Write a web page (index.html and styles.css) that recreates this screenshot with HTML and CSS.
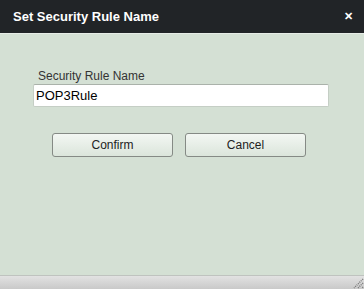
FILE: index.html
```html
<!DOCTYPE html>
<html>
<head>
  <title>Set Security Rule Name</title>
  <link rel="stylesheet" href="styles.css">
</head>
<body>
  <div class="dialog">
    <div class="dialog-header">
      <h2>Set Security Rule Name</h2>
      <span class="close-button">&#x2715;</span>
    </div>

    <div class="dialog-body">
      <form id="rule-form">
        <label for="rule-name">Security Rule Name</label>
        <input type="text" id="rule-name" value="POP3Rule">

        <div class="form-buttons">
          <button type="submit">Confirm</button>
          <button type="button">Cancel</button>
        </div>
      </form>
    </div>

    <div class="dialog-footer">
      <svg class="resize-grip" width="12" height="12" viewBox="0 0 12 12">
        <path d="M11 2 L2 11 M11 6 L6 11 M11 10 L10 11" stroke="#777" stroke-width="1.4" stroke-dasharray="1 1"/>
      </svg>
    </div>
  </div>
</body>
</html>
```

FILE: styles.css
```css
/* Reset default margin and padding */
body, h2, form {
  margin: 0;
  padding: 0;
}

body {
  font-family: Arial, "Liberation Sans", sans-serif;
  background-color: #d4e0d4;
}

.dialog {
  display: flex;
  flex-direction: column;
  height: 289px;
}

/* Header bar */
.dialog-header {
  height: 33px;
  background-color: #212427;
  border-bottom: 1px solid #e6ece6;
  display: flex;
  align-items: center;
  justify-content: space-between;
  padding: 0 11px 0 13px;
}

.dialog-header h2 {
  color: #fff;
  font-size: 13px;
  font-weight: bold;
}

.close-button {
  color: #fff;
  font-size: 11px;
  font-weight: bold;
}

/* Body */
.dialog-body {
  flex: 1;
  padding: 35px 35px 0 33px;
}

label {
  display: block;
  font-size: 12px;
  color: #333;
  margin-left: 5px;
  line-height: 15px;
}

input {
  display: block;
  width: 296px;
  height: 23px;
  box-sizing: border-box;
  margin: 0;
  padding: 0 2px;
  font-family: Arial, "Liberation Sans", sans-serif;
  font-size: 13px;
  color: #000;
  background-color: #fff;
  border: 1px solid #c5cec5;
  border-top-color: #aab2aa;
  border-radius: 2px;
}

.form-buttons {
  display: flex;
  gap: 12px;
  margin: 26px 0 0 19px;
}

button {
  width: 121px;
  height: 24px;
  box-sizing: border-box;
  padding: 0;
  font-family: Arial, "Liberation Sans", sans-serif;
  font-size: 12px;
  color: #222;
  background: linear-gradient(#f3f7f3, #dbe5db);
  border: 1px solid #858a85;
  border-radius: 3px;
  cursor: pointer;
}

/* Footer / status bar */
.dialog-footer {
  height: 13px;
  border-top: 1px solid #bfc3bf;
  background: linear-gradient(#e2e2e2, #c9c9c9);
  display: flex;
  justify-content: flex-end;
  align-items: flex-end;
}

.resize-grip {
  display: block;
}
```
